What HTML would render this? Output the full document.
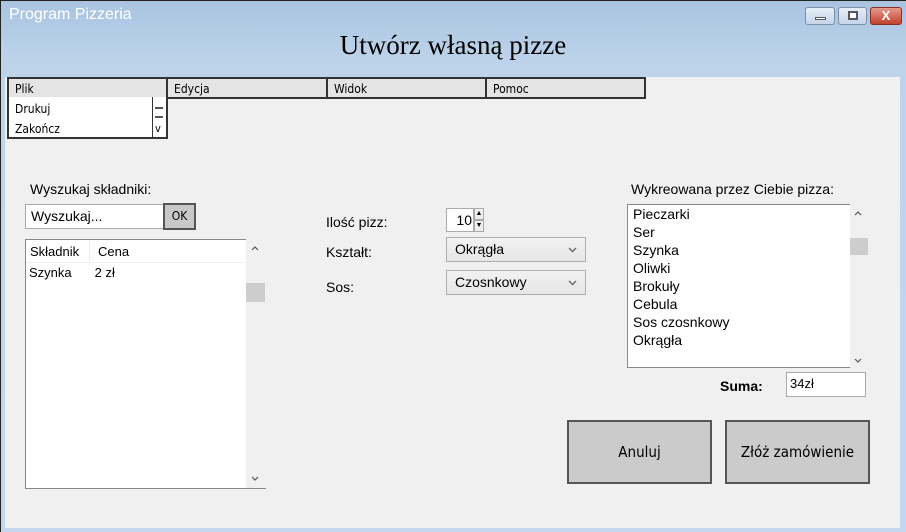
<!DOCTYPE html>
<html><head><meta charset="utf-8"><style>
*{margin:0;padding:0;box-sizing:border-box}
body{width:906px;height:532px;position:relative;overflow:hidden;background:linear-gradient(#a9c3e0,#bcd3ea 60px,#c3d8ee);font-family:"Liberation Sans",sans-serif;font-size:14px;color:#000}
.a{position:absolute}
.sk{font-family:"DejaVu Sans Condensed","DejaVu Sans",sans-serif;font-size:12px}
.panel{left:5px;top:77px;width:895px;height:451px;background:#f0f0f0}
.wb{top:7px;height:18px;border:1px solid #7d8ea6;border-radius:3px;background:linear-gradient(#e6eef8,#c5d5ea)}
.menu{top:77px;height:22px;border:2px solid #333;background:#e4e4e4;padding:3px 6px}
.combo{width:140px;height:25px;border:1px solid #adadad;background:linear-gradient(#f2f2f2,#e6e6e6);padding:3px 8px;font-size:14px}
.combo svg{position:absolute;right:8px;top:9px}
</style></head><body>
<div class="a" style="left:0;top:0;width:906px;height:1px;background:#222"></div>
<div class="a" style="left:0;top:0;width:1px;height:532px;background:#222"></div>
<div class="a" style="left:9px;top:6px;color:#fff;font-size:16px">Program Pizzeria</div>
<div class="a wb" style="left:805px;width:30px"><div class="a" style="left:9px;top:9px;width:11px;height:3px;background:#fff;border:1px solid #556"></div></div>
<div class="a wb" style="left:838px;width:29px"><div class="a" style="left:9px;top:3px;width:10px;height:9px;border:2px solid #556;background:#fff"></div></div>
<div class="a wb" style="left:870px;width:32px;background:linear-gradient(#e69a8c,#c2412d);border-color:#8a2f23;color:#fff;text-align:center;font-weight:bold;font-size:13px;line-height:16px">X</div>
<div class="a" style="left:0;top:30px;width:906px;text-align:center;font-family:'Liberation Serif',serif;font-size:27px">Utwórz własną pizze</div>
<div class="a panel"></div>
<div class="a menu sk" style="left:7px;width:161px">Plik</div>
<div class="a sk" style="left:7px;top:97px;width:161px;height:42px;border:2px solid #333;border-top:none;background:#fff;padding:2px 6px;line-height:20px">Drukuj<br>Zakończ
<div class="a" style="left:143px;top:0;width:1px;height:40px;background:#333"></div>
<div class="a" style="left:146px;top:10px;width:8px;height:2px;background:#555"></div>
<div class="a" style="left:146px;top:19px;width:8px;height:2px;background:#555"></div>
<div class="a" style="left:146px;top:22px;font-size:11px">v</div></div>
<div class="a menu sk" style="left:166px;width:162px">Edycja</div>
<div class="a menu sk" style="left:326px;width:161px">Widok</div>
<div class="a menu sk" style="left:485px;width:161px">Pomoc</div>

<div class="a" style="left:30px;top:181px">Wyszukaj składniki:</div>
<div class="a" style="left:25px;top:204px;width:140px;height:25px;border:1px solid #aaa;background:#fff;padding:3px 5px">Wyszukaj...</div>
<div class="a sk" style="left:163px;top:203px;width:33px;height:27px;border:2px solid #555;background:#c8c8c8;text-align:center;line-height:23px">OK</div>
<div class="a" style="left:25px;top:239px;width:221px;height:250px;background:#fff;border:1px solid #888;border-right:none"></div>
<div class="a" style="left:25px;top:488px;width:241px;height:1px;background:#888"></div>
<div class="a" style="left:26px;top:240px;width:219px;height:23px;border-bottom:1px solid #eaf0f6;padding:4px 4px;font-size:13px">Składnik<span class="a" style="left:63px;top:0;width:1px;height:22px;background:#e8eef5"></span><span class="a" style="left:72px;top:4px">Cena</span></div>
<div class="a" style="left:29px;top:265px;font-size:13px">Szynka<span style="margin-left:23px">2 zł</span></div>
<div class="a" style="left:246px;top:283px;width:19px;height:19px;background:#cdcdcd"></div>
<svg class="a" style="left:251px;top:246px" width="8" height="5"><path d="M1 4L4 1L7 4" fill="none" stroke="#555" stroke-width="1.2"/></svg>
<svg class="a" style="left:251px;top:476px" width="8" height="5"><path d="M1 1L4 4L7 1" fill="none" stroke="#555" stroke-width="1.2"/></svg>

<div class="a" style="left:326px;top:214px">Ilość pizz:</div>
<div class="a" style="left:326px;top:244px">Kształt:</div>
<div class="a" style="left:326px;top:279px">Sos:</div>
<div class="a" style="left:446px;top:208px;width:28px;height:24px;background:#fff;border:1px solid #aaa;text-align:right;padding:3px 1px">10</div>
<div class="a" style="left:474px;top:208px;width:10px;height:12px;border:1px solid #aaa;background:#eee;font-size:7px;text-align:center;line-height:10px">▲</div>
<div class="a" style="left:474px;top:220px;width:10px;height:12px;border:1px solid #aaa;background:#eee;font-size:7px;text-align:center;line-height:10px">▼</div>
<div class="a combo" style="left:446px;top:237px">Okrągła<svg width="9" height="6"><path d="M1 1L4.5 4.5L8 1" fill="none" stroke="#666" stroke-width="1.4"/></svg></div>
<div class="a combo" style="left:446px;top:270px">Czosnkowy<svg width="9" height="6"><path d="M1 1L4.5 4.5L8 1" fill="none" stroke="#666" stroke-width="1.4"/></svg></div>

<div class="a" style="left:631px;top:181px">Wykreowana przez Ciebie pizza:</div>
<div class="a" style="left:627px;top:204px;width:223px;height:164px;background:#fff;border:1px solid #888;border-right:none;padding:0 5px;line-height:18px;font-size:14px">Pieczarki<br>Ser<br>Szynka<br>Oliwki<br>Brokuły<br>Cebula<br>Sos czosnkowy<br>Okrągła</div>
<div class="a" style="left:850px;top:238px;width:18px;height:17px;background:#cdcdcd"></div>
<svg class="a" style="left:854px;top:211px" width="8" height="5"><path d="M1 4L4 1L7 4" fill="none" stroke="#555" stroke-width="1.2"/></svg>
<svg class="a" style="left:854px;top:358px" width="8" height="5"><path d="M1 1L4 4L7 1" fill="none" stroke="#555" stroke-width="1.2"/></svg>
<div class="a" style="left:720px;top:378px;font-weight:bold">Suma:</div>
<div class="a" style="left:786px;top:372px;width:80px;height:25px;background:#fff;border:1px solid #aaa;padding:3px 3px;font-size:13px">34zł</div>
<div class="a sk" style="left:567px;top:420px;width:145px;height:64px;border:2px solid #555;background:#cbcbcb;text-align:center;line-height:60px;font-size:15px">Anuluj</div>
<div class="a sk" style="left:725px;top:420px;width:145px;height:64px;border:2px solid #555;background:#cbcbcb;text-align:center;line-height:60px;font-size:15px">Złóż zamówienie</div>
</body></html>
